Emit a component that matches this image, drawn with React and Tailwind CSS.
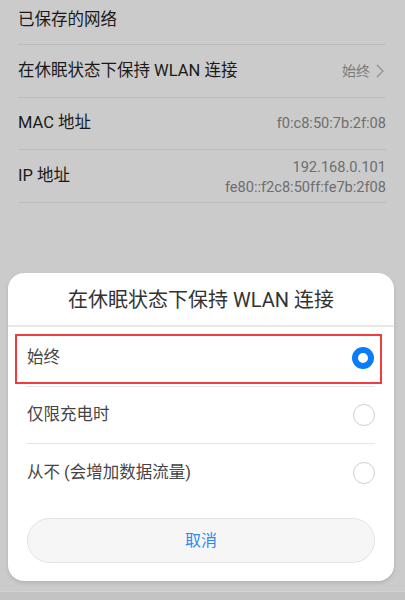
import React from "react";

const font = { fontFamily: '"Roboto", "Noto Sans CJK SC", sans-serif' };

function Row({ left, right, h, className = "" }) {
  return (
    <div className={`flex items-center justify-between border-b border-[#bcbcbc] ${h} ${className}`}>
      <span className="text-[16.5px] text-[#1a1a1a] leading-none">{left}</span>
      {right}
    </div>
  );
}

function Radio({ checked }) {
  return checked ? (
    <div className="w-[22px] h-[22px] rounded-full border-[6px] border-[#0a7cf7] bg-white" />
  ) : (
    <div className="w-[22px] h-[22px] rounded-full border-[1.5px] border-[#cfcfcf] bg-white" />
  );
}

export default function App() {
  return (
    <div className="w-[405px] h-[600px] bg-[#cbcbcb] flex flex-col overflow-hidden" style={font}>
      <div className="px-[18px] mr-[1px]">
        <Row h="h-[45px] pb-[4px]" left="已保存的网络" />
        <Row
          h="h-[53px]"
          left="在休眠状态下保持 WLAN 连接"
          right={
            <div className="flex items-center gap-[6px] text-[14px] text-[#7a7a7a]">
              <span>始终</span>
              <svg width="8" height="14" viewBox="0 0 8 14" className="mr-[2px]">
                <path d="M1 1 L7 7 L1 13" fill="none" stroke="#8e8e8e" strokeWidth="1.2" />
              </svg>
            </div>
          }
        />
        <Row
          h="h-[52px]"
          left="MAC 地址"
          right={<span className="text-[14.6px] text-[#6e6e6e]">f0:c8:50:7b:2f:08</span>}
        />
        <Row
          h="h-[53px]"
          left="IP 地址"
          right={
            <div className="flex flex-col items-end text-[14.6px] leading-[20px] text-[#6e6e6e] pt-[1px]">
              <span>192.168.0.101</span>
              <span>fe80::f2c8:50ff:fe7b:2f08</span>
            </div>
          }
        />
      </div>

      <div className="mt-[70px] mx-[8px] mr-[11px] h-[308px] bg-white rounded-[16px] shadow-[0_2px_4px_rgba(0,0,0,0.12)] flex flex-col relative">
        <div className="h-[54px] flex items-center justify-center text-[20px] text-[#333333] border-b-2 border-[#e8e8e8] pt-[1px]">
          在休眠状态下保持 WLAN 连接
        </div>
        <div className="px-[19px] mt-[3px]">
          <div className="h-[57px] flex items-center justify-between border-b border-[#e6e6e6] pr-[1px]">
            <span className="text-[16.5px] text-[#454545]">始终</span>
            <Radio checked />
          </div>
          <div className="h-[57px] flex items-center justify-between border-b border-[#e6e6e6]">
            <span className="text-[16.5px] text-[#454545]">仅限充电时</span>
            <Radio />
          </div>
          <div className="h-[58px] flex items-center justify-between">
            <span className="text-[16.5px] text-[#454545]">从不 (会增加数据流量)</span>
            <Radio />
          </div>
          <div className="mt-[16px] h-[45px] rounded-full bg-[#f6f6f6] border border-[#e3e3e3] flex items-center justify-center text-[16px] text-[#2b8af0]">
            取消
          </div>
        </div>
        <div className="absolute left-[7px] top-[61px] w-[367px] h-[50px] border-2 border-[#f03c3c] pointer-events-none" />
      </div>

      <div className="mt-[10px] flex-1 bg-[#c3c3c3] border-t border-[#d2d2d2]" />
    </div>
  );
}
